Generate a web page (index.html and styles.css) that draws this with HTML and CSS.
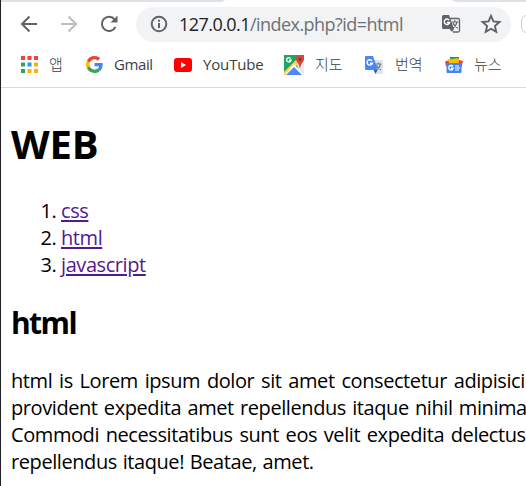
FILE: index.html
```html
<!DOCTYPE html>
<html lang="ko">
<head>
<meta charset="utf-8">
<title>WEB</title>
<link rel="stylesheet" href="styles.css">
</head>
<body>
<div class="window">
  <header>
    <div class="tabs"><span class="tab-left"></span><span class="tab-right"></span></div>
    <div class="toolbar">
      <svg class="nav" viewBox="0 0 18 18"><path d="M17 9H2M9.500 1.500L2 9l7.500 7.500"/></svg>
      <svg class="nav disabled" viewBox="0 0 18 18"><path d="M1 9h15M8.500 1.500L16 9l-7.500 7.500"/></svg>
      <svg class="nav reload" viewBox="0 0 18 18"><path d="M15.400 12A7.100 7.100 0 1 1 14.600 4.500"/><path class="solid" d="M17.500 .5v7h-7z"/></svg>
      <div class="omnibox">
        <svg class="info" viewBox="0 0 18 18"><circle cx="9" cy="9" r="7.300"/><path d="M9 8v5M9 4.800v2"/></svg>
        <span class="url"><b>127.0.0.1</b>/index.php?id=html</span>
        <svg class="page-translate" viewBox="0 0 18 18"><path class="outline" d="M8 3.500h8q1.500 0 1.500 1.500v10.500q0 1.500-1.500 1.500h-5"/><path class="solid" d="M1.500 0H7l5 14H1.500Q0 14 0 12.500v-11Q0 0 1.500 0zM7.500 14h4.500L10 17z"/><path class="g" d="M7.200 5.200A2.700 2.700 0 1 0 7.600 7.500H5"/><path class="char" d="M9.500 7h7M12.700 5.300V7M15 7.200q-1 4-4 6M11 8q1.500 3.500 4.700 5.200"/></svg>
        <svg class="star" viewBox="0 0 18 18"><path d="M9 1.700l2.200 5 5.400.5-4.100 3.600 1.200 5.300L9 13.300l-4.700 2.800 1.200-5.300L1.400 7.200l5.400-.5z"/></svg>
      </div>
      <span class="extension"></span>
    </div>
    <nav class="bookmarks">
      <a><svg class="apps" viewBox="0 0 17 17"><g fill="#f44336"><path d="M0 0h4v4H0zM6.500 0h4v4h-4zM13 0h4v4h-4z"/></g><path fill="#34a062" d="M0 6.500h4v4H0zM0 13h4v4H0z"/><path fill="#2997ff" d="M6.500 6.500h4v4h-4z"/><path fill="#fdb309" d="M13 6.500h4v4h-4zM6.500 13h4v4h-4zM13 13h4v4h-4z"/></svg><span>앱</span></a>
      <a><svg class="google" viewBox="0 0 48 48"><path fill="#ea4335" d="M24 9.500c3.540 0 6.710 1.220 9.210 3.600l6.850-6.850C35.900 2.380 30.470 0 24 0 14.620 0 6.510 5.380 2.560 13.220l7.980 6.190C12.430 13.720 17.740 9.500 24 9.500z"/><path fill="#4285f4" d="M46.980 24.550c0-1.570-.15-3.090-.38-4.550H24v9.020h12.940c-.58 2.960-2.260 5.480-4.780 7.180l7.730 6c4.510-4.180 7.090-10.360 7.090-17.650z"/><path fill="#fbbc05" d="M10.530 28.590A14.500 14.500 0 0 1 10.530 19.410l-7.980-6.190a24 24 0 0 0 0 21.560z"/><path fill="#34a853" d="M24 48c6.480 0 11.930-2.130 15.890-5.810l-7.730-6c-2.150 1.450-4.920 2.300-8.160 2.300-6.260 0-11.570-4.220-13.470-9.910l-7.980 6.190C6.510 42.620 14.620 48 24 48z"/></svg><span class="latin">Gmail</span></a>
      <a><svg class="youtube" viewBox="0 0 18 14"><rect width="18" height="14" rx="3" fill="#f00"/><path fill="#fff" d="M7 4l5 3-5 3z"/></svg><span class="latin yt-text">YouTube</span></a>
      <a><svg class="wide" viewBox="0 0 20 20"><path fill="#1fa463" d="M0 0h20v20H0z"/><path fill="#e8eaed" d="M12 8l8-4v16h-3z"/><path fill="#ffd34e" d="M0 17L12 5l3 3L3 20H0z"/><path fill="#fff" d="M1 20L10 9l10 11z"/><path fill="#4c8bf5" d="M2 20l8-8 8 8z"/><path fill="#db4437" d="M16 0a4 4 0 0 1 4 4c0 3-3.200 4-3.800 9h-.6C15.200 8 12 7 12 4a4 4 0 0 1 4-4z"/><circle cx="16" cy="4.200" r="1.400" fill="#8b2f28"/><path class="g" d="M6.700 3.600a2.200 2.200 0 1 0 .3 1.700H5"/></svg><span>지도</span></a>
      <a><svg class="wide" viewBox="0 0 20 20"><path fill="#e1e3e6" d="M8 5h10q1 0 1 1v12q0 1-1 1h-6z"/><path fill="#3a50c2" d="M9 14h5l-2.500 5z"/><path fill="#4889f4" d="M2 1h7l5 14H2q-1 0-1-1V2q0-1 1-1z"/><path class="g" d="M8 5.800a2.700 2.700 0 1 0 .4 2.400H6"/><path class="char2" d="M11.500 9h6M14.500 7.500V9M16.500 9.500q-1 4-4 5.500M12.500 10q1.500 3.500 4.500 5"/></svg><span>번역</span></a>
      <a><svg class="news" viewBox="0 0 18 18"><path fill="#0b9d58" d="M5 1h9v6H5z"/><path fill="#fbbc05" d="M2.500 3.500l11-1.500 2 6H4z"/><path fill="#ea4335" d="M0 5.500l3-1 2 4-4 2zM14 4l4 1-1.500 6-3-2z"/><path fill="#4285f4" d="M1.500 7h15V16q0 1-1 1h-13q-1 0-1-1z"/><path class="g" d="M7.800 10.500a2.200 2.200 0 1 0 .3 1.800H6"/><path class="lines" d="M10 10h4M10 12h5M10 14h4"/></svg><span>뉴스</span></a>
    </nav>
  </header>
  <main>
    <h1>WEB</h1>
    <ol>
      <li><a href="#">css</a></li>
      <li><a href="#">html</a></li>
      <li><a href="#">javascript</a></li>
    </ol>
    <h2>html</h2>
    <p><span class="l1">html is Lorem ipsum dolor sit amet consectetur adipisici</span><br><span class="l2">provident expedita amet repellendus itaque nihil minima</span><br><span class="l3">Commodi necessitatibus sunt eos velit expedita delectus</span><br><span class="l4">repellendus itaque! Beatae, amet.</span></p>
  </main>
</div>
</body>
</html>
```
FILE: styles.css
```css
* { box-sizing: border-box; }
body { margin: 0; background: #fff; color: #000; font-family: "Open Sans", "Noto Sans CJK KR", sans-serif; overflow: hidden; }
.window { height: 486px; overflow: hidden; border-left: 1px solid #202126; }
header { height: 88px; border-bottom: 1px solid #dadce0; }
svg { display: block; flex: none; fill: none; overflow: visible; }
.tabs { display: flex; justify-content: space-between; height: 2px; }
.tab-left { width: 224px; background: #dee1e6; border-bottom-right-radius: 8px 2px; }
.tab-right { width: 74px; background: #dee1e6; border-bottom-left-radius: 8px 2px; }
.toolbar { display: flex; align-items: center; height: 44px; padding-left: 19px; }
.nav { width: 18px; height: 18px; margin-right: 22px; stroke: #5f6368; stroke-width: 2; }
.disabled { stroke: #bcbec1; }
.reload { margin-right: 18px; }
.solid { fill: #5f6368; stroke: none; }
.omnibox { display: flex; align-items: center; flex: none; width: 375px; height: 35px; border-radius: 18px; background: #f1f3f4; padding-left: 14px; }
.info { width: 18px; height: 18px; stroke: #5f6368; stroke-width: 2; }
.url { width: 263px; margin-left: 11px; font-size: 18px; line-height: 24px; color: #6d7175; white-space: nowrap; letter-spacing: -.55px; }
.url b { color: #202124; font-weight: 400; }
.page-translate { width: 18px; height: 18px; }
.outline { stroke: #5f6368; stroke-width: 1.3; }
.g { stroke: #fff; stroke-width: 1.4; }
.char { stroke: #5f6368; stroke-width: 1.2; }
.char2 { stroke: #6c7d85; stroke-width: 1.2; }
.lines { stroke: #fff; stroke-width: 1.2; }
.star { width: 20px; height: 20px; margin-left: 21px; stroke: #5f6368; stroke-width: 1.7; }
.extension { flex: none; width: 20px; height: 18px; margin-left: 10px; border: 1px solid #c8cacd; border-radius: 6px; }
.bookmarks { display: grid; grid-template-columns: 65px 88px 110px 80px 81px 80px; padding-left: 20px; height: 37px; color: #3c4043; font-size: 15px; font-weight: 300; }
.bookmarks a { display: flex; align-items: center; white-space: nowrap; }
.bookmarks span { margin: 0 0 1px 11px; line-height: 22px; }
.bookmarks .latin { font-weight: 400; letter-spacing: -.4px; }
.bookmarks .yt-text { letter-spacing: -.15px; }
.apps, .google { width: 17px; height: 17px; }
.youtube { width: 18px; height: 14px; }
.wide { width: 20px; height: 20px; }
.news { width: 18px; height: 18px; }
main { padding: 0 10px; font-size: 20px; line-height: 27px; letter-spacing: -.42px; }
h1 { margin: 29px 0 26px; font-size: 40px; line-height: 54px; font-weight: 700; letter-spacing: -.2px; }
ol { margin: 0; padding-left: 50px; }
a[href] { color: #551a8b; text-underline-offset: 2px; text-decoration-thickness: 2px; text-decoration-skip-ink: auto; }
h2 { margin: 25px 0 24px; font-size: 30px; line-height: 40px; font-weight: 700; letter-spacing: -1.6px; }
p { margin: 0; white-space: nowrap; }
.l1 { word-spacing: 2px; }
.l2 { word-spacing: 1.5px; }
.l3 { word-spacing: 1.9px; }
.l4 { word-spacing: 1px; }
```
